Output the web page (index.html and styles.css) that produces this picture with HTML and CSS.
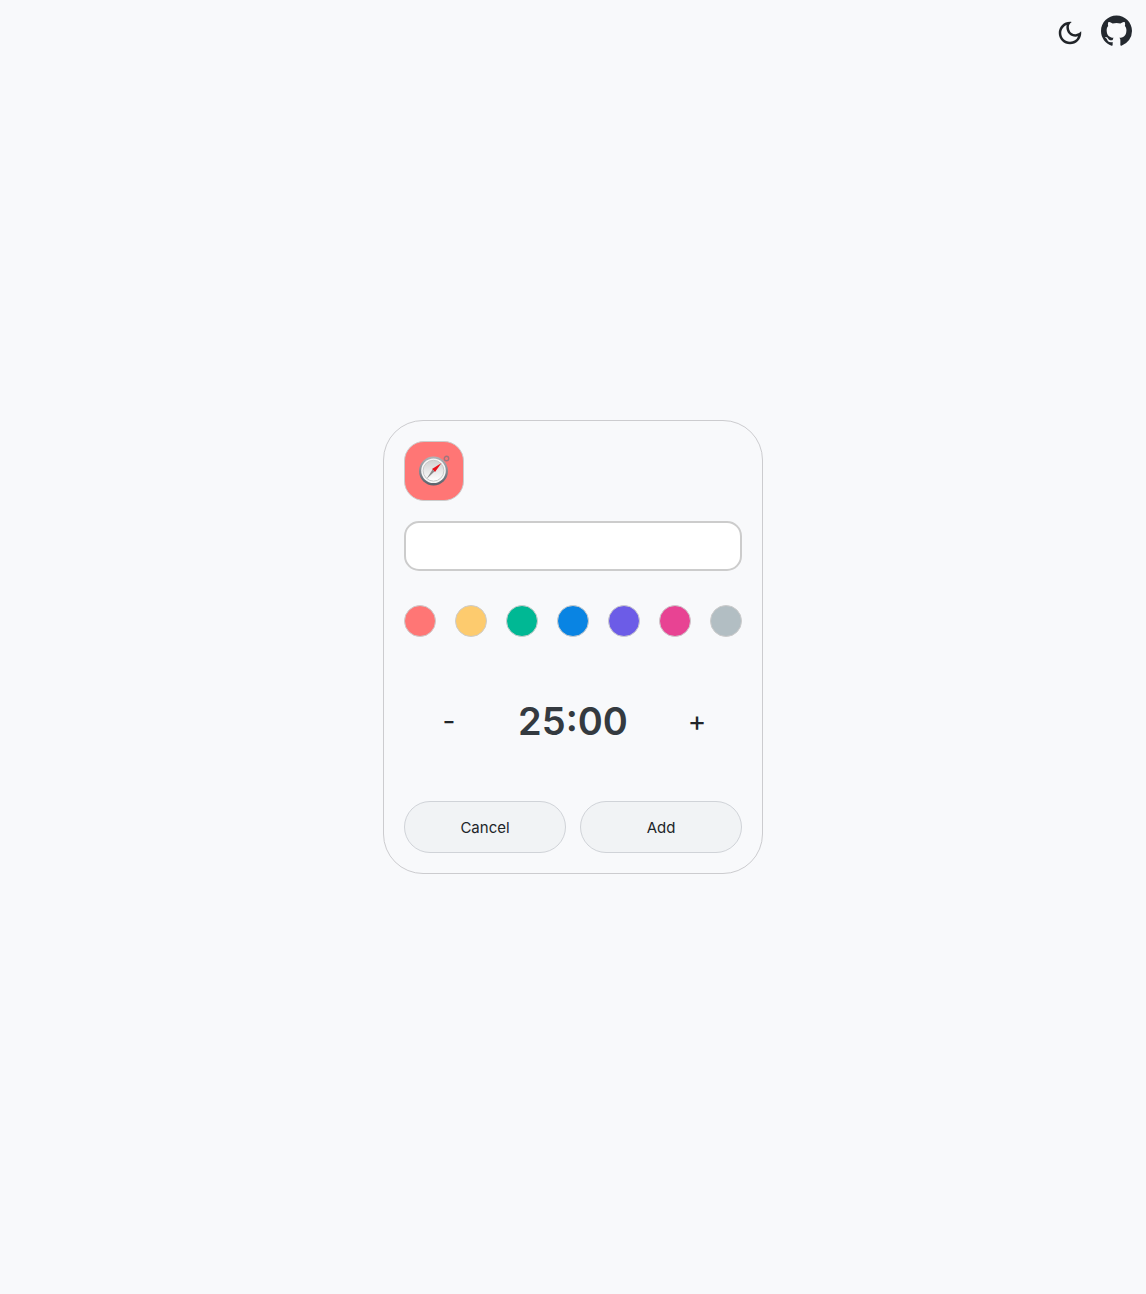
FILE: index.html
```html
<!DOCTYPE html>
<html lang="en">
<head>
<meta charset="utf-8">
<meta name="viewport" content="width=device-width, initial-scale=1">
<title>Add timer</title>
<link rel="stylesheet" href="styles.css">
</head>
<body>
<header class="toolbar">
  <button class="icon-button" type="button" aria-label="Dark mode">
    <svg class="moon" viewBox="0 0 24 24" aria-hidden="true"><path d="M9.37 5.51A7.35 7.35 0 0 0 9.1 7.5c0 4.08 3.32 7.4 7.4 7.4.68 0 1.35-.09 1.99-.27A7.014 7.014 0 0 1 12 19c-3.86 0-7-3.14-7-7 0-2.93 1.81-5.45 4.37-6.49zM12 3a9 9 0 1 0 9 9c0-.46-.04-.92-.1-1.36a5.389 5.389 0 0 1-4.4 2.26 5.403 5.403 0 0 1-3.14-9.8c-.44-.06-.9-.1-1.36-.1z"/></svg>
  </button>
  <a class="github-link" href="#" aria-label="GitHub">
    <svg class="github" viewBox="0 0 16 16" aria-hidden="true"><path fill-rule="evenodd" d="M8 0C3.58 0 0 3.58 0 8c0 3.54 2.29 6.53 5.47 7.59.4.07.55-.17.55-.38 0-.19-.01-.82-.01-1.49-2.01.37-2.53-.49-2.69-.94-.09-.23-.48-.94-.82-1.13-.28-.15-.68-.52-.01-.53.63-.01 1.08.58 1.23.82.72 1.21 1.87.87 2.33.66.07-.52.28-.87.51-1.07-1.78-.2-3.64-.89-3.64-3.95 0-.87.31-1.59.82-2.15-.08-.2-.36-1.02.08-2.12 0 0 .67-.21 2.2.82.64-.18 1.32-.27 2-.27s1.36.09 2 .27c1.53-1.04 2.2-.82 2.2-.82.44 1.1.16 1.92.08 2.12.51.56.82 1.27.82 2.15 0 3.07-1.87 3.75-3.65 3.95.29.25.54.73.54 1.48 0 1.07-.01 1.93-.01 2.2 0 .21.15.46.55.38A8.01 8.01 0 0 0 16 8c0-4.42-3.58-8-8-8z"/></svg>
  </a>
</header>
<main class="page">
  <form class="card">
    <button class="emoji" type="button" aria-label="Choose icon">
      <svg class="compass" viewBox="0 0 32 32" aria-hidden="true">
        <defs>
          <linearGradient id="rim" x1="0" y1="0" x2="0" y2="1"><stop offset="0" stop-color="#b0b4b8"/><stop offset="1" stop-color="#59616b"/></linearGradient>
          <linearGradient id="face" x1="0" y1="0" x2="0" y2="1"><stop offset="0" stop-color="#d0d1d2"/><stop offset="1" stop-color="#ffffff"/></linearGradient>
        </defs>
        <circle cx="28.500" cy="3.500" r="2.200" fill="none" stroke="#a0757d" stroke-width="1.400"/>
        <circle cx="15.500" cy="16" r="14.500" fill="url(#rim)"/>
        <circle cx="15.500" cy="15.700" r="12.300" fill="#f6f6f6"/>
        <circle cx="15.500" cy="15.700" r="10.400" fill="url(#face)" stroke="#c8c9ca"/>
        <path d="M23.500 8 14 14l3 3z" fill="#e8101c"/>
        <path d="M14.500 14.500l2 2L8.500 24z" fill="#8b8b8b"/>
      </svg>
    </button>
    <input class="name" type="text" aria-label="Timer name">
    <div class="colors" role="group" aria-label="Color">
      <button class="swatch coral" type="button" aria-label="Coral"></button>
      <button class="swatch yellow" type="button" aria-label="Yellow"></button>
      <button class="swatch green" type="button" aria-label="Green"></button>
      <button class="swatch blue" type="button" aria-label="Blue"></button>
      <button class="swatch purple" type="button" aria-label="Purple"></button>
      <button class="swatch pink" type="button" aria-label="Pink"></button>
      <button class="swatch gray" type="button" aria-label="Gray"></button>
    </div>
    <div class="duration">
      <button class="step" type="button">-</button>
      <output class="time">25:00</output>
      <button class="step" type="button">+</button>
    </div>
    <div class="actions">
      <button class="action" type="button">Cancel</button>
      <button class="action" type="submit">Add</button>
    </div>
  </form>
</main>
</body>
</html>
```
FILE: styles.css
```css
* {
  box-sizing: border-box;
}

body {
  margin: 0;
  background: #f8f9fb;
  color: #212529;
  font-family: Inter, "Liberation Sans", sans-serif;
}

button,
input {
  margin: 0;
  padding: 0;
  color: inherit;
  font: inherit;
}

button {
  cursor: pointer;
}

svg {
  display: block;
}

.toolbar {
  position: fixed;
  top: 14px;
  right: 14px;
  display: flex;
  align-items: center;
  gap: 16px;
}

.icon-button {
  border: 0;
  background: none;
}

.moon {
  width: 30px;
  height: 30px;
  margin-top: 4px;
  fill: #212529;
}

.github-link {
  color: #24292f;
}

.github {
  width: 31px;
  height: 32px;
  fill: currentColor;
}

.page {
  display: flex;
  align-items: center;
  justify-content: center;
  min-height: 100vh;
}

.card {
  display: flex;
  flex-direction: column;
  width: 100%;
  max-width: 380px;
  padding: 20px;
  border: 1px solid #cccccf;
  border-radius: 40px;
}

.emoji {
  display: flex;
  align-items: center;
  justify-content: center;
  width: 60px;
  height: 60px;
  border: 1px solid #ccc;
  border-radius: 20px;
  background: #ff7675;
}

.compass {
  width: 32px;
  height: 32px;
}

.name {
  width: 100%;
  height: 50px;
  margin-top: 20px;
  padding: 0 14px;
  border: 2px solid #ccc;
  border-radius: 15px;
  background: #fff;
}

.colors {
  display: flex;
  justify-content: space-between;
  margin-top: 34px;
}

.swatch {
  width: 32px;
  height: 32px;
  border: 1px solid #ccc;
  border-radius: 50%;
}

.coral { background: #ff7675; }
.yellow { background: #fdcb6e; }
.green { background: #00b894; }
.blue { background: #0984e3; }
.purple { background: #6c5ce7; }
.pink { background: #e84393; }
.gray { background: #b2bec3; }

.duration {
  display: grid;
  grid-template-columns: 90px 1fr 90px;
  align-items: center;
  margin: 60px 0 56px;
}

.step {
  border: 0;
  background: none;
  font-size: 28px;
  line-height: 48px;
}

.time {
  color: #343a40;
  font-size: 38px;
  font-weight: 600;
  line-height: 48px;
  text-align: center;
}

.actions {
  display: grid;
  grid-template-columns: 1fr 1fr;
  gap: 14px;
}

.action {
  height: 52px;
  border: 1px solid #d0d3d8;
  border-radius: 26px;
  background: #f1f3f5;
  font-size: 15px;
}
```
